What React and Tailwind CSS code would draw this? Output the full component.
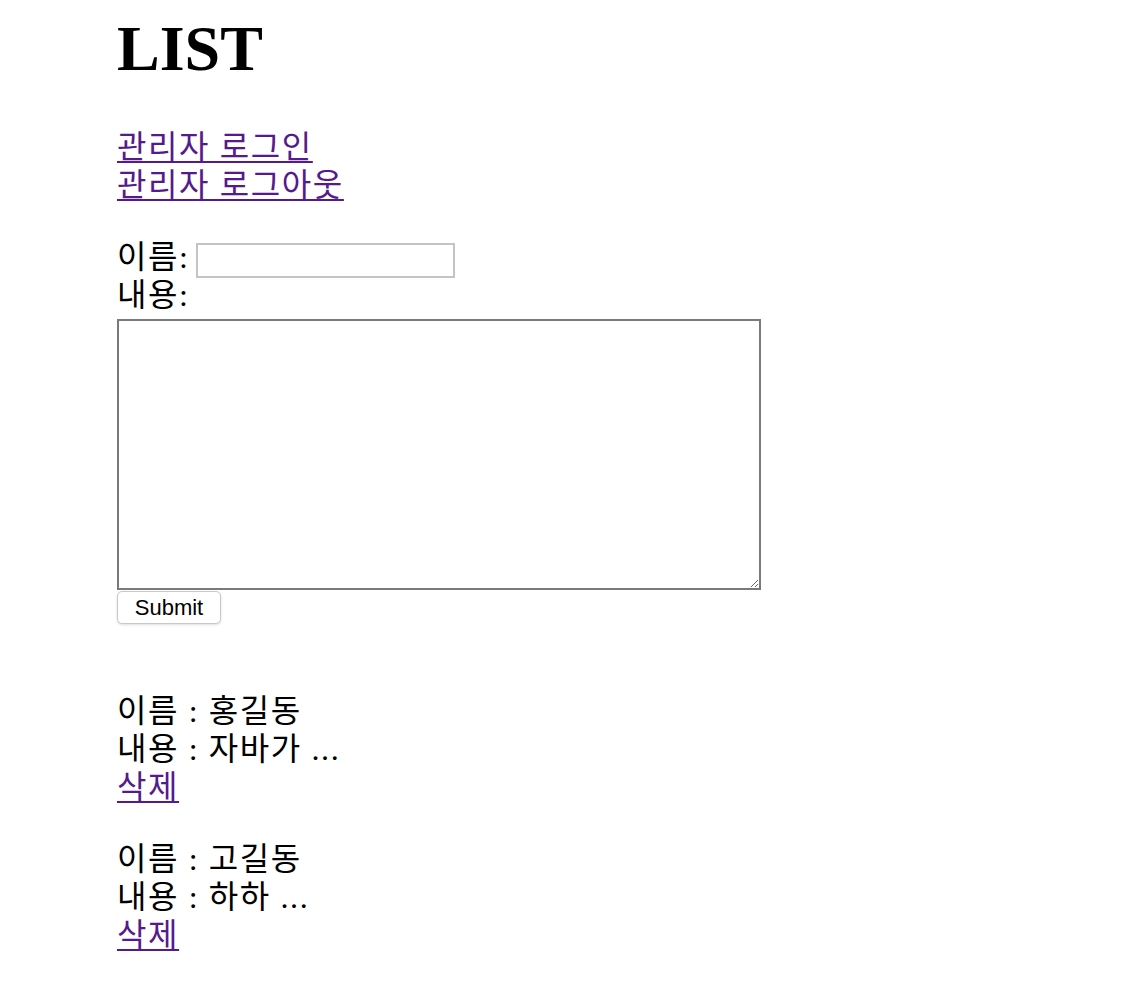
import React from 'react';

const posts = [
    { name: '홍길동', content: '자바가 ...' },
    { name: '고길동', content: '하하 ...' },
];

const linkClass = 'text-[#551a8b] underline underline-offset-[3px] decoration-[2px]';

const App = () => {
    return (
        <div
            className="min-h-screen bg-white text-black pl-[117px] text-[32px] leading-[38px] tracking-[1.6px]"
            style={{ fontFamily: '"Liberation Serif", "Noto Sans CJK KR", serif' }}
        >
            <h1 className="pt-[13px] text-[64px] leading-[72px] font-bold tracking-normal">LIST</h1>

            {/* admin links */}
            <div className="mt-[43px] flex flex-col items-start">
                <a href="#" className={linkClass}>관리자 로그인</a>
                <a href="#" className={linkClass}>관리자 로그아웃</a>
            </div>

            <form className="mt-[34px] flex flex-col items-start" onSubmit={(e) => e.preventDefault()}>
                <div className="flex items-start h-[38px]">
                    <span>이름:</span>
                    <input
                        type="text"
                        className="ml-[6px] mt-[5px] w-[259px] h-[35px] border-2 border-[#c4c4c4] bg-white outline-none text-base"
                    />
                </div>
                <div className="h-[38px]">내용:</div>
                <textarea className="mt-[5px] w-[644px] h-[271px] border-2 border-[#7a7a7a] bg-white outline-none resize text-base" />
                <button
                    type="submit"
                    className="mt-[1px] w-[104px] h-[33px] rounded-[5px] border border-[#c8c8c8] bg-white shadow-sm text-[22px] leading-none text-black tracking-normal"
                    style={{ fontFamily: '"Liberation Sans", Arial, sans-serif' }}
                >
                    Submit
                </button>
            </form>

            {/* guestbook entries */}
            <div className="mt-[68px] flex flex-col gap-[34px] pb-[26px]">
                {posts.map((post, i) => (
                    <div key={i} className="flex flex-col items-start">
                        <div>이름 : {post.name}</div>
                        <div>내용 : {post.content}</div>
                        <a href="#" className={linkClass}>삭제</a>
                    </div>
                ))}
            </div>
        </div>
    );
};

export default App;
